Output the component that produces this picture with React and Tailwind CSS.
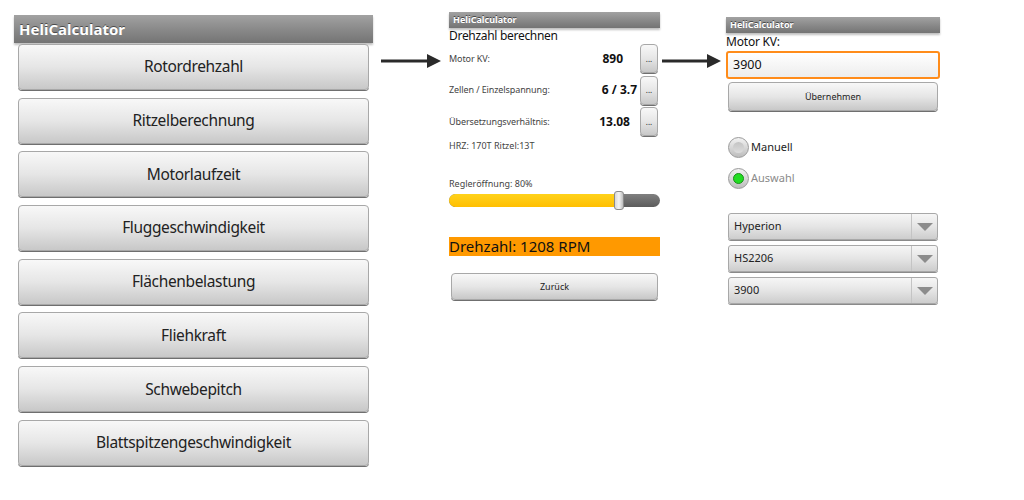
import React from "react";

const font = { fontFamily: '"Noto Sans", "Open Sans", sans-serif' };

const TitleBar = ({ big }) => (
  <div
    className={`bg-linear-to-b from-[#a2a2a2] via-[#8a8a8a] to-[#747474] text-white font-bold flex items-center shadow-[0_2px_2px_rgba(0,0,0,0.25)] [text-shadow:0_-1px_0_#4a4a4a] ${
      big ? "h-[28px] pl-[5px] text-[15px]" : "h-[16px] pl-[4px] text-[9px]"
    }`}
  >
    HeliCalculator
  </div>
);

const GrayButton = ({ children, className = "" }) => (
  <div
    className={`flex items-center justify-center bg-linear-to-b from-[#f8f8f8] via-[#e6e6e6] to-[#c8c8c8] border border-[#a8a8a8] rounded-[4px] shadow-[0_1px_0_#6f6f6f] text-[#222] ${className}`}
  >
    {children}
  </div>
);

const Arrow = ({ shaft }) => (
  <svg width="60" height="16" viewBox="0 0 60 16">
    <rect x="0" y="6.5" width={shaft} height="3" fill="#2a2a2a" />
    <polygon points={`${shaft - 1},1 ${shaft + 13},8 ${shaft - 1},15`} fill="#2a2a2a" />
  </svg>
);

const MainMenu = () => {
  const items = [
    "Rotordrehzahl",
    "Ritzelberechnung",
    "Motorlaufzeit",
    "Fluggeschwindigkeit",
    "Flächenbelastung",
    "Fliehkraft",
    "Schwebepitch",
    "Blattspitzengeschwindigkeit",
  ];
  return (
    <div className="w-[359px] mt-[15px] flex flex-col">
      <TitleBar big />
      <div className="flex flex-col gap-[7.7px] px-[4px] pt-[1px]">
        {items.map((t) => (
          <GrayButton key={t} className="h-[46px] text-[15.5px] tracking-[-0.35px]">
            {t}
          </GrayButton>
        ))}
      </div>
    </div>
  );
};

const ValueRow = ({ label, value, gap }) => (
  <div className="flex items-center h-[29px]">
    <span className="flex-1 text-[9px] text-[#444] tracking-[-0.1px]">{label}</span>
    <span className={`text-[12px] font-bold text-[#111] ${gap}`}>{value}</span>
    <GrayButton className="w-[18px] h-[29px] text-[8px] rounded-[3px] mr-[2px]">...</GrayButton>
  </div>
);

const RpmScreen = () => (
  <div className="w-[211px] mt-[12px] flex flex-col">
    <TitleBar />
    <div className="h-[16px] flex items-center text-[12px] tracking-[-0.3px] text-[#111] leading-none">
      Drehzahl berechnen
    </div>
    <div className="flex flex-col gap-[2.5px]">
      <ValueRow label="Motor KV:" value="890" gap="mr-[17px]" />
      <ValueRow label="Zellen / Einzelspannung:" value="6 / 3.7" gap="mr-[3px]" />
      <ValueRow label="Übersetzungsverhältnis:" value="13.08" gap="mr-[10px]" />
    </div>
    <div className="text-[9px] text-[#444] mt-[3px]">HRZ: 170T Ritzel:13T</div>
    <div className="text-[9px] text-[#444] mt-[24px]">Regleröffnung: 80%</div>
    <div className="relative mt-[4px] h-[13px] rounded-full bg-linear-to-b from-[#808080] to-[#5c5c5c] flex overflow-visible">
      <div className="w-[168px] h-full rounded-l-full bg-linear-to-b from-[#ffd21a] to-[#ffbf00]" />
      <div className="absolute left-[165px] top-[-3px] w-[10px] h-[19px] rounded-[3px] bg-linear-to-r from-[#d8d8d8] via-[#f4f4f4] to-[#bdbdbd] border border-[#8a8a8a]" />
    </div>
    <div className="mt-[30px] h-[19px] bg-[#ff9900] flex items-center text-[15px] text-[#111] leading-none">
      Drehzahl: 1208 RPM
    </div>
    <GrayButton className="mt-[17px] mx-[2px] h-[27px] text-[9px]">Zurück</GrayButton>
  </div>
);

const Radio = ({ checked, label }) => (
  <div className="flex items-center h-[21px]">
    <div className="w-[21px] h-[21px] rounded-full bg-linear-to-b from-[#f2f2f2] to-[#bdbdbd] border border-[#9a9a9a] flex items-center justify-center">
      <div
        className={`w-[11px] h-[11px] rounded-full ${
          checked
            ? "bg-[#22dd22] border border-[#1a8f1a]"
            : "bg-linear-to-b from-[#c4c4c4] to-[#dcdcdc]"
        }`}
      />
    </div>
    <span className={`ml-[2px] text-[11px] ${checked ? "text-[#8a8a8a]" : "text-[#222]"}`}>{label}</span>
  </div>
);

const Spinner = ({ value }) => (
  <div className="h-[27px] flex bg-linear-to-b from-[#f6f6f6] via-[#e5e5e5] to-[#cdcdcd] border border-[#a8a8a8] rounded-[3px] shadow-[0_1px_0_#8a8a8a]">
    <div className="flex-1 flex items-center pl-[5px] text-[11px] text-[#222]">{value}</div>
    <div className="w-[26px] border-l border-[#c4c4c4] flex items-center justify-center">
      <svg width="16" height="8" viewBox="0 0 16 8">
        <polygon points="0,0 16,0 8,8" fill="#8c8c8c" />
      </svg>
    </div>
  </div>
);

const KvScreen = () => (
  <div className="w-[214px] mt-[17px] flex flex-col">
    <TitleBar />
    <div className="h-[18px] flex items-center text-[12px] tracking-[-0.2px] text-[#111] leading-none">Motor KV:</div>
    <div className="h-[28px] border-2 border-[#ff8c1a] rounded-[3px] bg-linear-to-b from-[#ffffff] to-[#ededed] flex items-center pl-[5px] text-[12.5px] text-[#111]">
      3900
    </div>
    <GrayButton className="mt-[3px] mx-[2px] h-[29px] text-[9px]">Übernehmen</GrayButton>
    <div className="mt-[26px] ml-[2px] flex flex-col gap-[10px]">
      <Radio label="Manuell" />
      <Radio checked label="Auswahl" />
    </div>
    <div className="mt-[24px] mx-[2px] flex flex-col gap-[5px]">
      <Spinner value="Hyperion" />
      <Spinner value="HS2206" />
      <Spinner value="3900" />
    </div>
  </div>
);

export default function App() {
  return (
    <div className="w-[1024px] h-[500px] bg-white overflow-hidden flex items-start pl-[14px]" style={font}>
      <MainMenu />
      <div className="ml-[8px] mt-[53px]">
        <Arrow shaft={47} />
      </div>
      <div className="ml-[8px]">
        <RpmScreen />
      </div>
      <div className="ml-[2px] mt-[53px] w-[60px]">
        <Arrow shaft={46} />
      </div>
      <div className="ml-[4px]">
        <KvScreen />
      </div>
    </div>
  );
}
